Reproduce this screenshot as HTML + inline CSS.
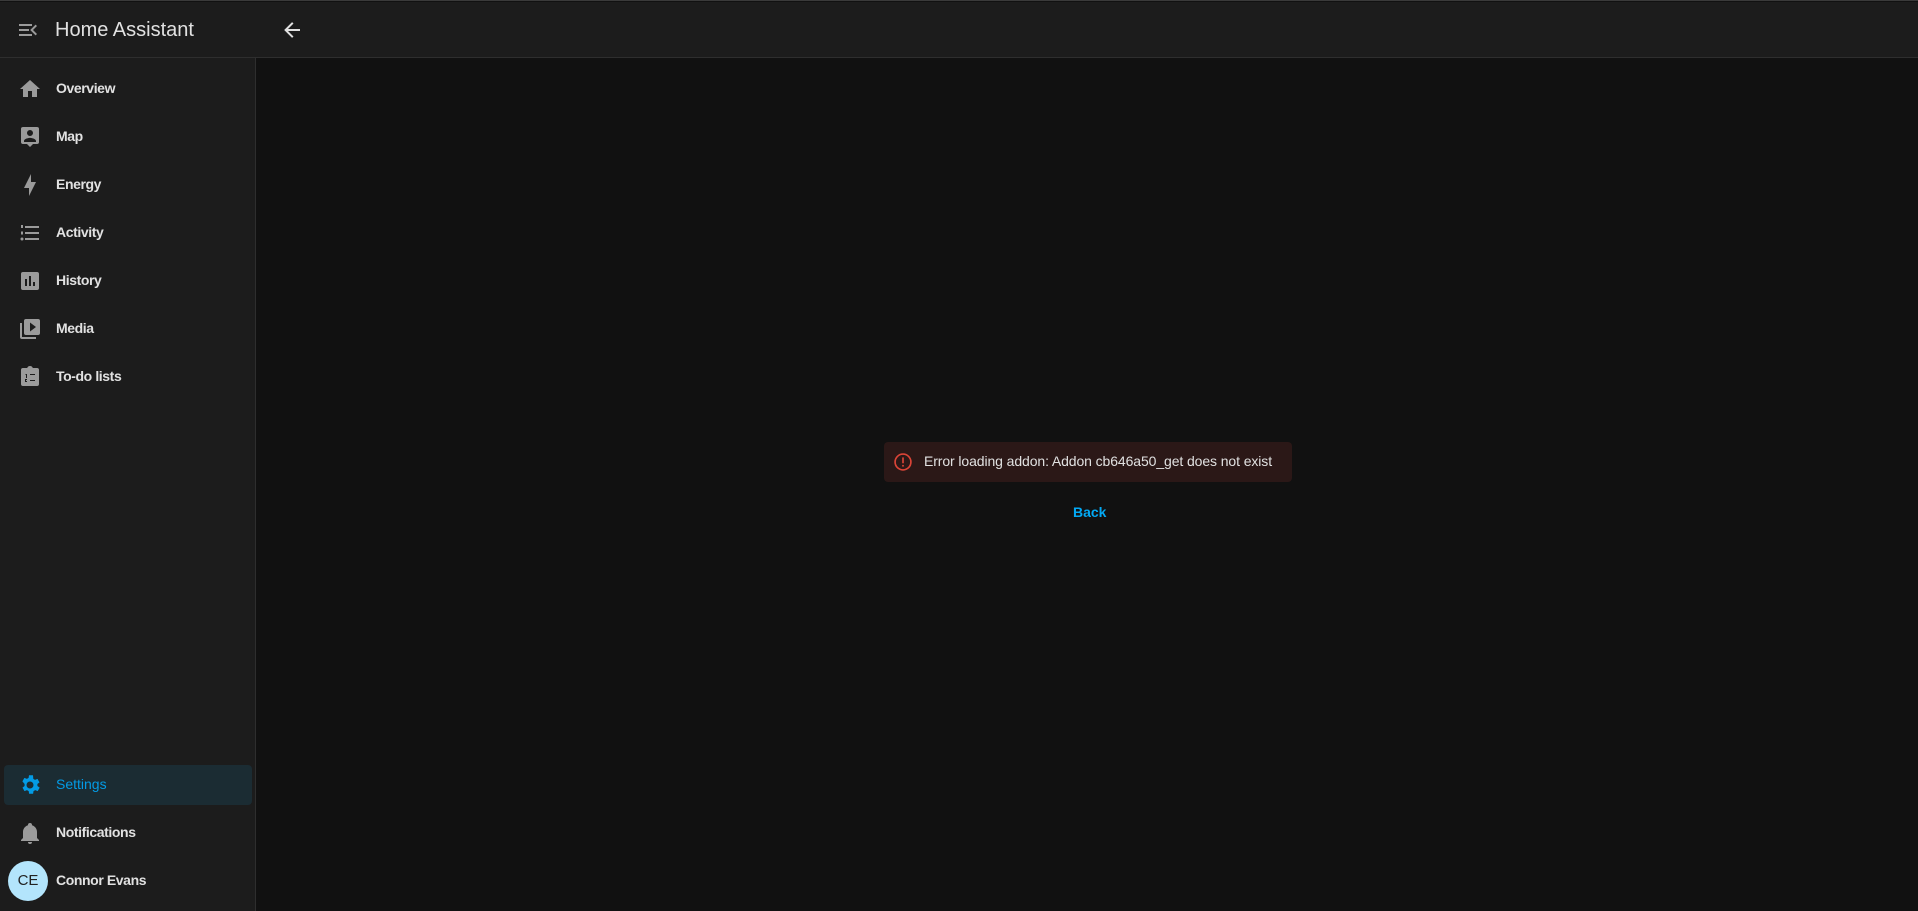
<!DOCTYPE html>
<html><head><meta charset="utf-8"><style>
*{box-sizing:border-box;margin:0;padding:0}
body{width:1918px;height:910px;background:#111111;font-family:"Liberation Sans",sans-serif;overflow:hidden;position:relative;border-top:1px solid #3a3a3a}
.side{position:absolute;left:0;top:1px;width:256px;height:909px;background:#1c1c1c;border-right:1px solid #2e2e2e}
.hdr{position:absolute;left:0;top:1px;width:1918px;height:56px;background:#1c1c1c;border-bottom:1px solid #2e2e2e}
.title{position:absolute;left:55px;top:18px;font-size:20px;color:#e1e1e1}
.item{position:absolute;left:4px;width:248px;height:40px;border-radius:4px}
.item svg{position:absolute;left:14px;top:8px;width:24px;height:24px;fill:#9b9b9b}
.item span{position:absolute;left:52px;top:11px;font-size:14px;font-weight:bold;color:#e1e1e1;letter-spacing:-0.4px}
.sel{background:#1b2c33}
.sel svg{fill:#039be5}.sel span{color:#039be5;font-weight:normal;letter-spacing:0}
.av{position:absolute;left:8px;top:860px;width:40px;height:40px;border-radius:50%;background:#b3e5fc;color:#222;font-size:15px;text-align:center;line-height:40px}
.err{position:absolute;left:884px;top:441px;width:408px;height:40px;background:#2b1817;border-radius:4px}
.err span{position:absolute;left:40px;top:11px;font-size:14px;color:#e1e1e1;letter-spacing:-0.1px}
.back{position:absolute;left:1073px;top:503px;font-size:14px;font-weight:bold;color:#03a9f4}
</style></head><body>
<div class="side"></div>
<div class="hdr"></div>
<svg style="position:absolute;left:16px;top:17px" width="24" height="24" viewBox="0 0 24 24" fill="#9b9b9b"><path d="M3 6h13v2H3zM3 11h10v2H3zM3 16h13v2H3zM21 8l-4 4 4 4-1.4 1.4L14.2 12l5.4-5.4z"/></svg>
<div class="title">Home Assistant</div>
<svg style="position:absolute;left:280px;top:17px" width="24" height="24" viewBox="0 0 24 24" fill="#e1e1e1"><path d="M20 11v2H8l5.5 5.5-1.42 1.42L4.16 12l7.92-7.92L13.5 5.5 8 11h12z"/></svg>

<div class="item" style="top:68px"><svg viewBox="0 0 24 24"><path d="M10 20v-6h4v6h5v-8h3L12 3 2 12h3v8z"/></svg><span>Overview</span></div>
<div class="item" style="top:116px"><svg viewBox="0 0 24 24"><path d="M19 2H5a2 2 0 0 0-2 2v13a2 2 0 0 0 2 2h4l3 3 3-3h4a2 2 0 0 0 2-2V4a2 2 0 0 0-2-2zm-7 3a3 3 0 1 1 0 6 3 3 0 0 1 0-6zm6 12H6v-1c0-2 4-3.1 6-3.1s6 1.1 6 3.1z"/></svg><span>Map</span></div>
<div class="item" style="top:164px"><svg viewBox="0 0 24 24"><path d="M11 15H6l7-14v8h5l-7 14z"/></svg><span>Energy</span></div>
<div class="item" style="top:212px"><svg viewBox="0 0 24 24"><path d="M7 5h14v2H7zM7 11h14v2H7zM7 17h14v2H7zM3 4h2v3H3zM3 10.5h2v3H3zM4 16.5a1.5 1.5 0 1 1 0 3 1.5 1.5 0 0 1 0-3z"/></svg><span>Activity</span></div>
<div class="item" style="top:260px"><svg viewBox="0 0 24 24"><path d="M19 3H5a2 2 0 0 0-2 2v14a2 2 0 0 0 2 2h14a2 2 0 0 0 2-2V5a2 2 0 0 0-2-2zM9 17H7v-7h2zm4 0h-2V7h2zm4 0h-2v-4h2z"/></svg><span>History</span></div>
<div class="item" style="top:308px"><svg viewBox="0 0 24 24"><path d="M4 6H2v14a2 2 0 0 0 2 2h14v-2H4zm16-4H8a2 2 0 0 0-2 2v12a2 2 0 0 0 2 2h12a2 2 0 0 0 2-2V4a2 2 0 0 0-2-2zm-8 12.5v-9l6 4.5z"/></svg><span>Media</span></div>
<div class="item" style="top:356px"><svg viewBox="0 0 24 24"><path d="M19 3h-4.2A3 3 0 0 0 12 1a3 3 0 0 0-2.8 2H5a2 2 0 0 0-2 2v14a2 2 0 0 0 2 2h14a2 2 0 0 0 2-2V5a2 2 0 0 0-2-2zM8 9h1v4H8v-3H7zm9 1h-5v-1h5zm0 6h-5v-1h5zM7 14h2v1H8v1h1v1H7z"/></svg><span>To-do lists</span></div>

<div class="item sel" style="top:764px"><svg viewBox="0 0 24 24"><path d="M12 15.5A3.5 3.5 0 1 1 12 8.5a3.5 3.5 0 0 1 0 7zm7.4-2.5a7.8 7.8 0 0 0 0-2l2.1-1.6-2-3.5-2.5 1a7 7 0 0 0-1.7-1L15 2.2h-4l-.4 2.7a7 7 0 0 0-1.7 1l-2.5-1-2 3.5L6.6 11a7.8 7.8 0 0 0 0 2l-2.1 1.6 2 3.5 2.5-1a7 7 0 0 0 1.7 1l.4 2.7h4l.4-2.7a7 7 0 0 0 1.7-1l2.5 1 2-3.5z"/></svg><span>Settings</span></div>
<div class="item" style="top:812px"><svg viewBox="0 0 24 24"><path d="M21 19v1H3v-1l2-2v-6c0-3.1 2-5.8 5-6.7V4a2 2 0 0 1 4 0v.3c3 .9 5 3.6 5 6.7v6zm-7 2a2 2 0 0 1-4 0"/></svg><span>Notifications</span></div>
<div class="av">CE</div>
<div class="item" style="top:860px"><span>Connor Evans</span></div>

<div class="err"><svg style="position:absolute;left:9px;top:10px" width="20" height="20" viewBox="0 0 24 24"><circle cx="12" cy="12" r="9.5" fill="none" stroke="#db4437" stroke-width="2"/><rect x="11" y="6.5" width="2" height="7" fill="#db4437"/><rect x="11" y="15.5" width="2" height="2" fill="#db4437"/></svg><span>Error loading addon: Addon cb646a50_get does not exist</span></div>
<div class="back">Back</div>
</body></html>
